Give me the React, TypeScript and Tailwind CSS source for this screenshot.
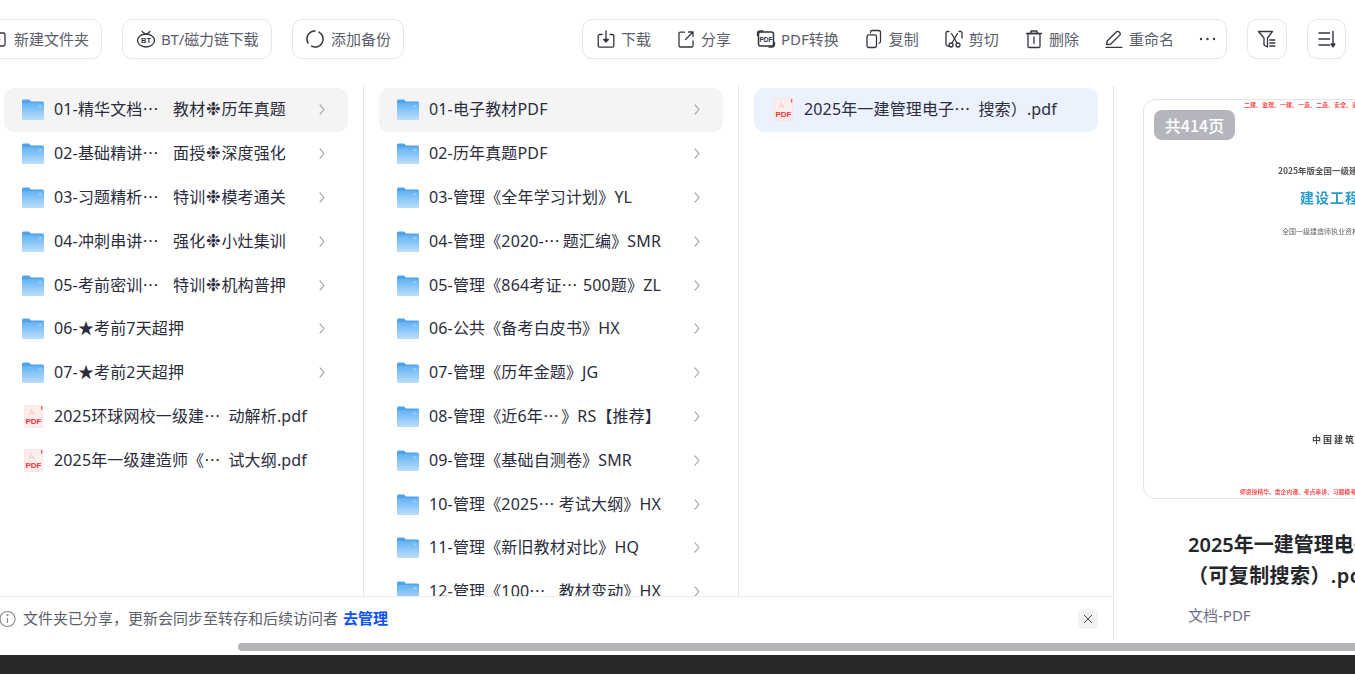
import type { ReactNode } from "react";

type Item = { name: string; tail?: string; pdf?: boolean };

const col1: Item[] = [
  { name: "01-精华文档⋯", tail: "教材❉历年真题" },
  { name: "02-基础精讲⋯", tail: "面授❉深度强化" },
  { name: "03-习题精析⋯", tail: "特训❉模考通关" },
  { name: "04-冲刺串讲⋯", tail: "强化❉小灶集训" },
  { name: "05-考前密训⋯", tail: "特训❉机构普押" },
  { name: "06-★考前7天超押" },
  { name: "07-★考前2天超押" },
  { name: "2025环球网校一级建⋯", tail: "动解析.pdf", pdf: true },
  { name: "2025年一级建造师《⋯", tail: "试大纲.pdf", pdf: true },
];

const col2: Item[] = [
  { name: "01-电子教材PDF" },
  { name: "02-历年真题PDF" },
  { name: "03-管理《全年学习计划》YL" },
  { name: "04-管理《2020-⋯", tail: "题汇编》SMR" },
  { name: "05-管理《864考证⋯", tail: "500题》ZL" },
  { name: "06-公共《备考白皮书》HX" },
  { name: "07-管理《历年金题》JG" },
  { name: "08-管理《近6年⋯", tail: "》RS【推荐】" },
  { name: "09-管理《基础自测卷》SMR" },
  { name: "10-管理《2025⋯", tail: "考试大纲》HX" },
  { name: "11-管理《新旧教材对比》HQ" },
  { name: "12-管理《100⋯", tail: "教材变动》HX" },
];

const col3: Item[] = [{ name: "2025年一建管理电子⋯", tail: "搜索）.pdf", pdf: true }];

const stroke = { fill: "none", stroke: "#34353f", strokeWidth: 1.3, strokeLinecap: "round" as const, strokeLinejoin: "round" as const };

function Ic({ children, size = 20 }: { children: ReactNode; size?: number }) {
  return (
    <svg width={size} height={size} viewBox="0 0 20 20" className="shrink-0" {...stroke}>
      {children}
    </svg>
  );
}

function FolderIcon() {
  return (
    <svg width="22" height="21" viewBox="0 0 22 21" className="shrink-0">
      <defs>
        <linearGradient id="fg" x1="0" y1="0" x2="0" y2="1">
          <stop offset="0%" stopColor="#62b2f4" />
          <stop offset="100%" stopColor="#bcdefb" />
        </linearGradient>
      </defs>
      <path d="M0 2a1.5 1.5 0 0 1 1.5-1.5h5.5l2 2h11.5a1.5 1.5 0 0 1 1.5 1.5v15a1.5 1.5 0 0 1-1.5 1.5h-19a1.5 1.5 0 0 1-1.5-1.5z" fill="#4fa3ea" />
      <path d="M0 4h22v15.2a1.5 1.5 0 0 1-1.5 1.5h-19a1.5 1.5 0 0 1-1.5-1.5z" fill="url(#fg)" />
      <rect x="16.5" y="6.5" width="3" height="1.6" fill="#a6d3f8" />
    </svg>
  );
}

function PdfIcon() {
  return (
    <svg width="19" height="23" viewBox="0 0 19 23" className="shrink-0">
      <rect x="0.4" y="0.4" width="18.2" height="22.2" rx="1.5" fill="#fdeeee" stroke="#f9dede" strokeWidth="0.8" />
      <rect x="17.2" y="1.2" width="1" height="3.4" fill="#f0313c" />
      <path d="M7 4.5c.8 2.5 1.5 3.5 3.5 5M7.2 5c-.4 2-1.2 3.4-2.7 4.5M5 9c2-.6 3.5-.6 5.5 0" fill="none" stroke="#f4b9bd" strokeWidth="0.7" />
      <text x="9.5" y="18.8" textAnchor="middle" fontSize="8" fontWeight="700" fill="#f5333f" fontFamily="'Liberation Sans', sans-serif">PDF</text>
    </svg>
  );
}

function Chevron() {
  return (
    <svg width="6" height="11" viewBox="0 0 6 11" className="shrink-0" fill="none" stroke="#9b9ca6" strokeWidth="1.1" strokeLinecap="round" strokeLinejoin="round">
      <path d="M1 .8l4 4.7-4 4.7" />
    </svg>
  );
}

// the flower sign is narrower than a CJK cell, so it gets a full-width box
function Tail({ text }: { text: string }) {
  const parts = text.split("❉");
  if (parts.length === 1) return <span>{text}</span>;
  return (
    <span>
      {parts[0]}
      <span className="inline-block w-4 text-center text-[18px] leading-none">❉</span>
      {parts[1]}
    </span>
  );
}

function Row({ item, active }: { item: Item; active?: string }) {
  return (
    <div className={`flex h-[43.8px] shrink-0 items-center rounded-[10px] pl-[18px] pr-[23px] ${active ?? ""}`}>
      <span className="flex w-[22px] shrink-0 justify-center">{item.pdf ? <PdfIcon /> : <FolderIcon />}</span>
      <div className={`ml-[10px] flex justify-between whitespace-nowrap pb-[1px] text-[16px] tracking-[0.15px] text-[#2b2c3c] ${item.pdf ? "w-[253px]" : "w-[232px]"}`}>
        <span>{item.name}</span>
        {item.tail && <Tail text={item.tail} />}
      </div>
      {!item.pdf && (
        <span className="ml-auto">
          <Chevron />
        </span>
      )}
    </div>
  );
}

function Column({ items, active, border = true, width }: { items: Item[]; active: string; border?: boolean; width: string }) {
  return (
    <div className={`flex h-full shrink-0 flex-col overflow-hidden px-[15px] pt-[2px] ${width} ${border ? "border-r border-[#e6e6e8]" : ""}`}>
      {items.map((item, i) => (
        <Row key={item.name} item={item} active={i === 0 ? active : ""} />
      ))}
    </div>
  );
}

function Tool({ icon, label }: { icon: ReactNode; label: string }) {
  return (
    <div className="flex items-center gap-[5px] whitespace-nowrap text-[15px] text-[#5d5e6c]">
      {icon}
      <span>{label}</span>
    </div>
  );
}

function OutlineBtn({ children, className }: { children: ReactNode; className: string }) {
  return <div className={`flex h-10 shrink-0 items-center rounded-[10px] border border-[#e6e6e9] bg-white ${className}`}>{children}</div>;
}

function Toolbar() {
  return (
    <div className="-ml-[26px] flex h-[86px] items-start pt-[19px]">
      <OutlineBtn className="w-[128px] gap-[6px] px-[13px] text-[15px] text-[#5d5e6c]">
        <Ic>
          <rect x="2" y="4" width="15" height="13" rx="1.5" />
          <path d="M9.5 8.5v4.5M7.3 10.7h4.4" />
        </Ic>
        <span className="whitespace-nowrap">新建文件夹</span>
      </OutlineBtn>
      <OutlineBtn className="ml-5 w-[150px] gap-[5px] px-[13px] text-[15px] text-[#5d5e6c]">
        <Ic>
          <ellipse cx="10" cy="11.5" rx="8.5" ry="6.5" />
          <path d="M6 2.5l4 3 4-3" />
          <text x="10" y="14.3" textAnchor="middle" fontSize="7.5" fontWeight="700" fill="#34353f" stroke="none" fontFamily="'Liberation Sans', sans-serif">BT</text>
        </Ic>
        <span className="whitespace-nowrap tracking-[-0.15px]">BT/磁力链下载</span>
      </OutlineBtn>
      <OutlineBtn className="ml-5 w-[112px] gap-[6px] px-[12px] text-[15px] text-[#5d5e6c]">
        <Ic>
          <path d="M10 2A8 8 0 0 0 3.07 14" strokeWidth="1.5" />
          <path d="M6.5 17.2A8 8 0 0 0 14 3.07" strokeWidth="1.5" />
        </Ic>
        <span className="whitespace-nowrap">添加备份</span>
      </OutlineBtn>

      <OutlineBtn className="ml-[178px] w-[645px] gap-[25px] pl-[13px]">
        <Tool
          label="下载"
          icon={
            <Ic>
              <path d="M6 5.5H3.5a1.3 1.3 0 0 0-1.3 1.3v10a1.3 1.3 0 0 0 1.3 1.3h13a1.3 1.3 0 0 0 1.3-1.3v-10a1.3 1.3 0 0 0-1.3-1.3H14" />
              <path d="M10 1.8v9" />
              <path d="M7.7 10.5h4.6L10 13z" fill="#34353f" />
            </Ic>
          }
        />
        <Tool
          label="分享"
          icon={
            <Ic>
              <path d="M8.5 3.2H4.3A1.3 1.3 0 0 0 3 4.5v12.2A1.3 1.3 0 0 0 4.3 18h11.4a1.3 1.3 0 0 0 1.3-1.3V12" />
              <path d="M9.5 10.5L16.5 3.5M12.5 3h4.5v4.5" />
            </Ic>
          }
        />
        <Tool
          label="PDF转换"
          icon={
            <Ic>
              <rect x="2.5" y="3" width="15" height="14" rx="2" strokeWidth="1.5" />
              <path d="M1.5 6.5V4.500a2.5 2.5 0 0 1 2.5-2.5h3M18.5 13.5v2a2.5 2.5 0 0 1-2.5 2.5h-3" />
              <text x="10" y="12.5" textAnchor="middle" fontSize="6.6" fontWeight="700" fill="#34353f" stroke="none" fontFamily="'Liberation Sans', sans-serif">PDF</text>
            </Ic>
          }
        />
        <Tool
          label="复制"
          icon={
            <Ic>
              <rect x="3" y="5.8" width="9.5" height="12.7" rx="1.8" />
              <path d="M6.5 3.8V3a1.6 1.6 0 0 1 1.6-1.5h6.400A2 2 0 0 1 16.5 3.5v9a1.6 1.6 0 0 1-1.5 1.6" />
            </Ic>
          }
        />
        <Tool
          label="剪切"
          icon={
            <Ic>
              <path d="M5 2.5H3.3A1.3 1.3 0 0 0 2 3.8v11.4a2 2 0 0 0 2 2h2M15 2.5h1.7A1.3 1.3 0 0 1 18 3.8V9" />
              <path d="M7.5 4.5l5.5 9.5M13.5 4.5L8 14" />
              <circle cx="7" cy="16" r="2" />
              <circle cx="14" cy="16" r="2" />
            </Ic>
          }
        />
        <Tool
          label="删除"
          icon={
            <Ic>
              <path d="M2.5 4.5h15M7 4.5V2h6v2.5" />
              <rect x="4" y="4.5" width="12" height="14" rx="1.3" />
              <path d="M10 8v6.5" />
            </Ic>
          }
        />
        <Tool
          label="重命名"
          icon={
            <Ic>
              <path d="M2.5 15.5l.7-3.5L12.5 2.8a1.6 1.6 0 0 1 2.3 0l1 1a1.6 1.6 0 0 1 0 2.3L6.500 15.3z" />
              <path d="M2 18.3h16" />
            </Ic>
          }
        />
        <svg width="17" height="4" viewBox="0 0 17 4" className="shrink-0" fill="#34353f">
          <circle cx="2" cy="2" r="1.2" />
          <circle cx="8.5" cy="2" r="1.2" />
          <circle cx="15" cy="2" r="1.2" />
        </svg>
      </OutlineBtn>

      <OutlineBtn className="ml-5 w-10 justify-center">
        <Ic>
          <path d="M1.5 2.5h14l-5 6.5v9l-3.5-2V9z" />
          <path d="M12.8 11h5M12.8 14h5M12.8 17h5" />
        </Ic>
      </OutlineBtn>
      <OutlineBtn className="ml-5 w-[39px] justify-center">
        <Ic>
          <path d="M2 4h10.5M2 10h10.5M2 16h10.5" strokeWidth="1.4" />
          <path d="M16 2.500v14" strokeWidth="1.4" />
          <path d="M14 15h4l-2 3z" fill="#34353f" />
        </Ic>
      </OutlineBtn>
    </div>
  );
}

function Notice() {
  return (
    <div className="flex h-[45px] items-center border-t border-[#eeeeef] pl-[11px] pr-[15px] text-[15px] text-[#5d5e6c]">
      <svg width="18" height="18" viewBox="0 0 18 18" className="-ml-[1px] shrink-0" fill="none" stroke="#85868f" strokeWidth="1.1">
        <circle cx="8.5" cy="9" r="7.5" />
        <path d="M8.5 8v5" />
        <circle cx="8.5" cy="5.3" r="0.5" fill="#85868f" />
      </svg>
      <span className="mb-[2px] ml-[6px] whitespace-nowrap">文件夹已分享，更新会同步至转存和后续访问者</span>
      <span className="mb-[2px] ml-[5px] whitespace-nowrap font-bold text-[#0d53ff]">去管理</span>
      <div className="ml-auto flex h-5 w-5 items-center justify-center rounded-[5px] bg-[#f2f2f4]">
        <svg width="10" height="10" viewBox="0 0 10 10" fill="none" stroke="#45464f" strokeWidth="1">
          <path d="M1 1l8 8M9 1l-8 8" />
        </svg>
      </div>
    </div>
  );
}

function Preview() {
  return (
    <div className="relative flex h-[400px] w-[460px] flex-col overflow-hidden rounded-xl border border-[#e3e3e6] font-['Noto_Sans_CJK_SC','Liberation_Serif',serif]">
      <div className="absolute left-[10px] top-[10px] flex h-[30px] w-[81px] items-center justify-center rounded-lg bg-[#b5b6bd] text-[16px] font-medium text-white">共414页</div>
      <div className="flex flex-col blur-[0.4px]">
        <p className="ml-[100px] mt-[1px] whitespace-nowrap text-[6px] font-medium leading-[8px] text-[#ff2b2b]">二建、监理、一建、一造、二造、安全、资料</p>
        <p className="ml-[134px] mt-[55px] whitespace-nowrap text-[8.5px] font-bold leading-[12px] text-[#555]">2025年版全国一级建造师执业资格考试用书</p>
        <p className="ml-[156px] mt-[11px] whitespace-nowrap text-[14px] font-bold leading-[20px] tracking-[1px] text-[#2a9ccb]">建设工程项目管理</p>
        <p className="ml-[138px] mt-[19px] whitespace-nowrap text-[7px] leading-[10px] text-[#666]">全国一级建造师执业资格考试用书编写委员会</p>
        <p className="ml-[168px] mt-[198px] whitespace-nowrap text-[9px] font-bold leading-[12px] tracking-[2px] text-[#444]">中国建筑工业出版社</p>
        <p className="ml-[96px] mt-[42px] whitespace-nowrap text-[5.8px] font-medium leading-[8px] text-[#ff2b2b]">师资授精华、类企内课、考点串讲、习题模考</p>
      </div>
    </div>
  );
}

export default function App() {
  return (
    <div className="flex h-[674px] w-[1355px] flex-col overflow-hidden bg-white font-['Noto_Sans','Noto_Sans_CJK_SC','DejaVu_Sans',sans-serif]">
      <Toolbar />
      <div className="-ml-[11px] flex h-[555px] shrink-0">
        <div className="flex w-[1124px] shrink-0 flex-col">
          <div className="flex h-[510px] shrink-0">
            <Column items={col1} active="bg-[#f4f4f5]" width="w-[375px]" />
            <Column items={col2} active="bg-[#f4f4f5]" width="w-[375px]" />
            <Column items={col3} active="bg-[#ebf1fd]" border={false} width="w-[374px]" />
          </div>
          <Notice />
        </div>
        <div className="w-[500px] shrink-0 border-l border-[#e6e6e8] pl-[29px] pt-[13px]">
          <Preview />
          <div className="ml-[45px] mt-[30px] whitespace-nowrap text-[20px] font-semibold leading-[31px] text-[#25262b]">
            <p>2025年一建管理电子教材</p>
            <p className="tracking-[0.4px]">（可复制搜索）.pdf</p>
          </div>
          <p className="ml-[45px] mt-[13px] text-[15px] text-[#6f7085]">文档-PDF</p>
        </div>
      </div>
      <div className="h-[14px] shrink-0 pl-[238px] pt-[2px]">
        <div className="h-2 rounded-l-full bg-[#b4b4b8]" />
      </div>
      <div className="min-h-0 flex-1 bg-[#27282a]" />
    </div>
  );
}
